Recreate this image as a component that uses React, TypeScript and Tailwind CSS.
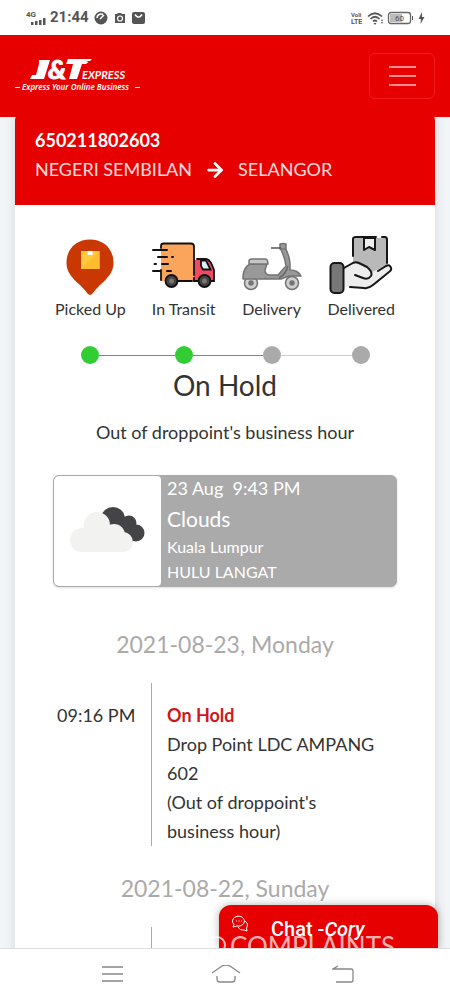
import { ArrowRight } from 'lucide-react';
import type { ReactNode } from 'react';

const PickedUpIcon = () => (
  <svg viewBox="0 0 64 64" className="size-16" aria-hidden="true">
    <path d="M32 60C30 60 28 56 22 50C14 43 8.500 37 8.500 28C8.500 13 19 4.500 32 4.500S55.500 13 55.500 28C55.500 37 50 43 42 50C36 56 34 60 32 60Z" fill="#c93703" />
    <rect x="23" y="16" width="18.500" height="18" fill="#ffc83d" />
    <path d="M23 34L41.500 16V34Z" fill="#ffbd2e" />
    <rect x="29.500" y="16" width="5" height="4" fill="#fff" />
  </svg>
);

const TransitIcon = () => (
  <svg viewBox="0 0 64 64" className="size-16" fill="none" stroke="#111" strokeWidth="1.800" strokeLinecap="round" aria-hidden="true">
    <path d="M9 9H42V46H9Z" fill="#fba55c" stroke="none" />
    <path d="M42 25H56L61 33V46H42Z" fill="#ee4a63" stroke="none" />
    <path d="M9 13V11Q9 8.500 11.500 8.500H39Q42 8.500 42 11.500V40M9 35V45M26 46H40M45 24H54Q57 24 60 30L62 35V46H59M42 43V46H46" />
    <path d="M49 25.500H54L58.500 34.500H51L49 31Z" fill="#dcecf8" />
    <path d="M1 15H15M6 22H15M20 22H21M2.500 29H4M10 29H16M1 36H8M15 36H19" strokeWidth="2" />
    <circle cx="19.500" cy="46" r="6" fill="#444" />
    <circle cx="52.500" cy="46" r="6" fill="#444" />
    <circle cx="19.500" cy="46" r="2.500" fill="#777" stroke="none" />
    <circle cx="52.500" cy="46" r="2.500" fill="#777" stroke="none" />
  </svg>
);

const DeliveryIcon = () => (
  <svg viewBox="0 0 64 64" className="size-16" fill="none" stroke="#747474" strokeWidth="1.500" strokeLinejoin="round" aria-hidden="true">
    <circle cx="11" cy="48" r="6.500" fill="#d0d0d0" />
    <circle cx="52" cy="48" r="6.500" fill="#d0d0d0" />
    <path d="M3 41Q4 32 10 29H27L25 35Q25 40 30 40H38L46 31Q45 22 40 13H45Q49 19 50 28V35Q58 35 61 41H49L41 44H3Z" fill="#999" />
    <path d="M9 29V26Q9 24 12 24H25Q28 24 28 29Z" fill="#c6c6c6" />
    <path d="M40 9Q43 8 46 9V14H40Z" fill="#999" />
    <path d="M31 13H41" stroke="#555" />
    <path d="M39 43Q46 39 48 31" stroke="#666" />
    <circle cx="11" cy="48" r="2" fill="#777" />
    <circle cx="52" cy="48" r="2" fill="#777" />
  </svg>
);

const DeliveredIcon = () => (
  <svg viewBox="0 0 64 64" className="size-16" fill="none" stroke="#161616" strokeWidth="2" strokeLinecap="round" strokeLinejoin="round" aria-hidden="true">
    <path d="M24 3H58V36L44 38L24 30Z" fill="#b9b9b9" stroke="none" />
    <path d="M14 34L25 28L39 32L43 37L59 30L62 34L40 53L14 52Z" fill="#ededed" stroke="none" />
    <path d="M24 21V4Q24 2 27 2H47M53 2H56Q58 2 58 5V28" />
    <path d="M35 3V15L40 12L46 15V3Z" fill="#eee" />
    <rect x="1.500" y="28" width="13" height="30" rx="4" fill="#777" />
    <path d="M15 33L22 29Q26 26 30 28L38 32Q44 37 42 41Q39 45 34 43L26 40M49 36L57 31Q61 29 62 33Q63 35 60 37L44 50Q39 54 35 53L21 52" />
  </svg>
);

const CloudsIcon = () => (
  <svg viewBox="0 0 76 50" className="w-[76px]" aria-hidden="true">
    <g fill="#444446">
      <circle cx="43" cy="13" r="12" />
      <circle cx="59" cy="17" r="7.500" />
      <circle cx="66" cy="27" r="8.500" />
      <path d="M45 8L58 16L64 35H45Z" />
    </g>
    <g fill="#f2f2f0">
      <circle cx="27" cy="19" r="13" />
      <circle cx="44" cy="29" r="11" />
      <circle cx="12" cy="34" r="12" />
      <circle cx="53" cy="36" r="10" />
      <rect x="11" y="28" width="43" height="18" />
    </g>
  </svg>
);

const ChatIcon = () => (
  <svg viewBox="0 0 18 18" className="size-[18px]" fill="none" stroke="#fff" strokeWidth="1" aria-hidden="true">
    <path d="M2 12L3 9.500A6 5 0 1 1 6 11Z" />
    <path d="M14 6Q18 9 15.500 13L16 16L13 15Q9 16 7 12" />
    <path d="M5 6H6M7.500 6H8.500M10 6H11" />
  </svg>
);

const Logo = () => (
  <svg viewBox="0 0 126 36" className="h-9 w-[126px] overflow-visible" role="img" aria-label="J&T Express" fill="#fff">
    <path d="M24 2H35L29 21H15L17 17H21L24 6Z" />
    <text x="33" y="21" fontSize="27" fontWeight="900" fontStyle="italic" fontFamily="Lato, sans-serif" stroke="#fff" strokeWidth="0.800">&amp;</text>
    <path d="M53 1H77L75 3H71L73.500 4L71 6H67L62 21H54L58 6H51Z" />
    <text x="67" y="21" fontSize="11" fontWeight="700" fontStyle="italic" fontFamily="Lato, sans-serif">EXPRESS</text>
    <text x="7" y="32" fontSize="8" fontWeight="600" fontStyle="italic" fontFamily="'Noto Sans', sans-serif">Express Your Online Business</text>
    <path d="M0 29H5V30H0ZM120 29H125V30H120Z" />
  </svg>
);

const StatusBar = () => (
  <div className="flex h-[35px] shrink-0 items-center justify-between bg-white pl-[26px] pr-[25px] font-['Roboto',sans-serif] text-[#555]">
    <div className="flex items-center gap-1">
      <svg viewBox="0 0 20 16" className="h-4 w-5" fill="#555" aria-hidden="true">
        <text x="0" y="7" fontSize="8" fontWeight="700">4G</text>
        <path d="M5 12H7.500V15H5ZM9 11H11.500V15H9ZM13 10H15.500V15H13ZM17 8H19.500V15H17Z" />
      </svg>
      <span className="text-[15px] font-bold">21:44</span>
      <svg viewBox="0 0 54 16" className="ml-px h-4 w-[54px]" fill="#555" aria-hidden="true">
        <circle cx="7" cy="8" r="6.500" />
        <path d="M3 8A4 4 0 0 1 9 4.500M6 9L10 5" stroke="#fff" strokeWidth="1.500" fill="none" />
        <path d="M21 4H23L24 3H27L28 4H31V13H21Z" />
        <circle cx="26" cy="8.500" r="2.500" fill="none" stroke="#fff" strokeWidth="1.200" />
        <rect x="38" y="2" width="13" height="12" rx="2" />
        <path d="M41 4.500Q44.500 10 48 4.500" stroke="#fff" strokeWidth="1.500" fill="none" />
      </svg>
    </div>
    <svg viewBox="0 0 74 16" className="h-4 w-[74px]" fill="#555" aria-hidden="true">
      <text x="0" y="7" fontSize="6" fontWeight="700">Voli</text>
      <text x="0" y="14" fontSize="7" fontWeight="700">LTE</text>
      <path d="M17 6.500Q24 0 31 6.500M19.500 9Q24 4.500 28.500 9M22 11.500Q24 9.500 26 11.500" stroke="#555" strokeWidth="1.700" fill="none" />
      <path d="M24 15L22.500 13H25.500ZM30 11L31 9L32 11ZM30 12H32L31 14Z" />
      <rect x="37.500" y="2.500" width="22" height="11" rx="2.500" fill="#fff" stroke="#666" strokeWidth="1.300" />
      <rect x="39" y="4" width="12" height="8" fill="#bbb" />
      <text x="44" y="11" fontSize="8">60</text>
      <path d="M61 6H62V10H61ZM71 2L67.500 9H70L69.500 14L73.500 7H71Z" />
    </svg>
  </div>
);

type Step = { label: string; icon: ReactNode; done: boolean };

const steps: Step[] = [
  { label: 'Picked Up', icon: <PickedUpIcon />, done: true },
  { label: 'In Transit', icon: <TransitIcon />, done: true },
  { label: 'Delivery', icon: <DeliveryIcon />, done: false },
  { label: 'Delivered', icon: <DeliveredIcon />, done: false },
];

// line before each dot; the first gap is a little wider to follow the labels
const connectors = ['', 'grow-[76] bg-[#4cae4c]', 'grow-[70] bg-[#4cae4c]', 'grow-[71] bg-[#ccc]'];

const Progress = () => (
  <>
    <ol className="flex justify-between px-10 pt-[30px]">
      {steps.map((step, i) => (
        <li
          key={step.label}
          className={`flex flex-col items-center whitespace-nowrap text-base leading-5 ${i === 1 ? 'pl-0.5' : ''}`}
        >
          {step.icon}
          {step.label}
        </li>
      ))}
    </ol>
    <div className="mt-[27px] flex items-center pl-[66px] pr-[65px]">
      {steps.map((step, i) => (
        <div key={step.label} className="contents">
          {i > 0 && <span className={`mt-px h-px ${connectors[i]}`} />}
          <span className={`size-[18px] shrink-0 rounded-full ${step.done ? 'bg-[#32cd32]' : 'bg-[#aaa]'}`} />
        </div>
      ))}
    </div>
  </>
);

const Weather = () => (
  <section className="mx-[38px] mt-7 flex h-28 overflow-hidden rounded-md border border-[#aaa] bg-[#aaa] text-white shadow-sm">
    <div className="flex w-[107px] shrink-0 items-center justify-center rounded bg-white">
      <CloudsIcon />
    </div>
    <div className="flex flex-col pl-1.5">
      <p className="whitespace-pre text-lg leading-6">23 Aug  9:43 PM</p>
      <p className="mt-1 text-[21px] leading-[30px]">Clouds</p>
      <p className="text-base leading-[26px]">Kuala Lumpur</p>
      <p className="text-base leading-6">HULU LANGAT</p>
    </div>
  </section>
);

const DayHeading = ({ children }: { children: ReactNode }) => (
  <h2 className="text-center text-[23px] leading-8 text-[#aaa]">{children}</h2>
);

const ChatButton = () => (
  <button className="absolute bottom-0 right-3 flex h-[43px] w-[219px] items-start rounded-t-xl bg-[#e60000] pl-3 pt-2.5 text-white shadow-[0_0_8px_rgba(0,0,0,0.3)]">
    <ChatIcon />
    <span className="ml-[22px] font-['Roboto',sans-serif] text-xl font-medium leading-7">
      Chat -<em>Cory</em>
    </span>
  </button>
);

const Watermark = () => (
  <div className="pointer-events-none absolute inset-x-0 bottom-0 flex h-3 gap-1 overflow-hidden pl-[186px] font-['Lato',sans-serif] text-[26px] leading-5 text-white/70" aria-hidden="true">
    <span className="size-[18px] shrink-0 rounded-full border-2 border-white/70" />
    <span className="size-[18px] shrink-0 rounded-full border-2 border-white/70" />
    <span>COMPLAINTS</span>
  </div>
);

const NavigationBar = () => (
  <nav className="flex h-[52px] shrink-0 items-center justify-between border-t border-[#ddd] bg-white pl-[102px] pr-24 text-[#888]">
    <button aria-label="Recent apps">
      <svg viewBox="0 0 22 18" className="h-[18px] w-[22px]" stroke="currentColor" strokeWidth="1.500">
        <path d="M0 1H21M0 8H21M0 15H21" />
      </svg>
    </button>
    <button aria-label="Home" className="pr-1">
      <svg viewBox="0 0 30 20" className="h-5 w-[30px]" fill="none" stroke="currentColor" strokeWidth="1.300">
        <path d="M1 8L11 1Q15 -1 19 1L29 8M6 11V14Q6 17 9 17H21Q24 17 24 14V11" />
      </svg>
    </button>
    <button aria-label="Back">
      <svg viewBox="0 0 22 20" className="h-5 w-[22px]" fill="none" stroke="currentColor" strokeWidth="1.300">
        <path d="M6 1L1 4H19Q21 4 21 6V15Q21 17 19 17H4" />
      </svg>
    </button>
  </nav>
);

export default function App() {
  return (
    <div className="flex h-screen flex-col overflow-hidden bg-[#f2f5f7] font-['Lato',sans-serif] text-[#333]">
      <StatusBar />
      <div className="relative flex-1 overflow-hidden">
        <header className="relative z-10 flex h-[82px] items-center justify-between bg-[#e60000] px-[15px]">
          <a href="#" aria-label="J&T Express home">
            <Logo />
          </a>
          <button aria-label="Toggle navigation" className="flex h-[46px] w-[66px] items-center justify-center rounded-md border border-[#f31c1c] text-[#ff8c8c]">
            <svg viewBox="0 0 27 22" className="h-[22px] w-[27px]" stroke="currentColor" strokeWidth="2" aria-hidden="true">
              <path d="M0 2H27M0 11H27M0 20H27" />
            </svg>
          </button>
        </header>

        <main className="mx-[15px] -mt-2 min-h-full rounded-xl bg-white shadow-[0_0_12px_rgba(0,0,0,0.12)]">
          <div className="rounded-t-xl bg-[#e60000] px-5 pb-[21px] pt-[17px] text-lg leading-[29px] text-white">
            <h1 className="font-bold">650211802603</h1>
            <p className="flex items-center gap-3 text-white/85">
              NEGERI SEMBILAN
              <ArrowRight size={22} strokeWidth={3} className="text-white" />
              SELANGOR
            </p>
          </div>

          <Progress />

          <div className="text-center">
            <h2 className="mt-1 text-[28px] leading-[34px]">On Hold</h2>
            <p className="mt-4 text-lg leading-[29px]">Out of droppoint's business hour</p>
          </div>

          <Weather />

          <div className="mt-[41px]">
            <DayHeading>2021-08-23, Monday</DayHeading>
            <div className="mt-[23px] flex px-[38px] text-lg leading-[29px]">
              <time className="w-[98px] shrink-0 pl-1 pt-[18px]">09:16 PM</time>
              <div className="border-l border-[#aaa] pl-[15px] pr-5 pt-[18px]">
                <p className="font-bold text-[#d01818]">On Hold</p>
                <p>Drop Point LDC AMPANG 602</p>
                <p>(Out of droppoint's business hour)</p>
              </div>
            </div>
          </div>

          <div className="mt-[26px]">
            <DayHeading>2021-08-22, Sunday</DayHeading>
            <div className="mt-[23px] flex px-[38px]">
              <div className="ml-[98px] h-40 border-l border-[#aaa]" />
            </div>
          </div>
        </main>

        <ChatButton />
        <Watermark />
      </div>
      <NavigationBar />
    </div>
  );
}
